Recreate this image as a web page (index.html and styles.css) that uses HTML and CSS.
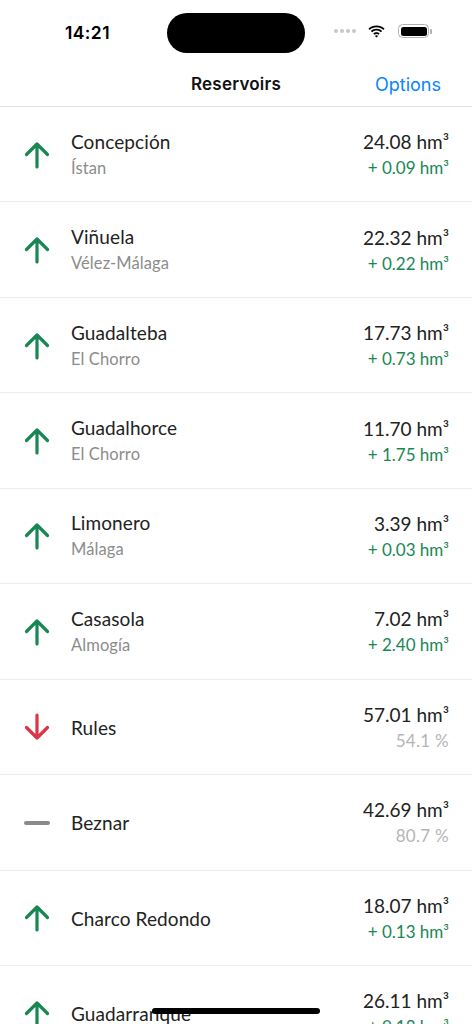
FILE: index.html
```html
<!DOCTYPE html>
<html lang="es">
<head>
<meta charset="utf-8">
<title>Reservoirs</title>
<link rel="stylesheet" href="styles.css">
</head>
<body>
<div class="screen">
  <div class="statusbar">
    <div class="time">14:21</div>
    <div class="island"></div>
    <div class="status-icons">
      <div class="dots"><span></span><span></span><span></span><span></span></div>
      <svg class="wifi" width="17" height="13" viewBox="0 0 17 13">
        <path d="M8.5 2.2c2.6 0 5 1 6.8 2.7l1.2-1.3C14.4 1.6 11.6 0.4 8.5 0.4S2.6 1.6 0.5 3.6l1.2 1.3C3.5 3.2 5.9 2.2 8.5 2.2z" fill="#000"/>
        <path d="M8.5 5.6c1.7 0 3.2 0.6 4.4 1.7l1.2-1.3C12.6 4.6 10.6 3.8 8.5 3.8S4.4 4.6 2.9 6l1.2 1.3C5.3 6.2 6.8 5.6 8.5 5.6z" fill="#000"/>
        <path d="M8.5 9c0.8 0 1.5 0.3 2 0.8l1.2-1.3c-0.8-0.8-2-1.3-3.2-1.3s-2.4 0.5-3.2 1.3l1.2 1.3C7 9.3 7.7 9 8.5 9z M8.5 12.6l1.6-1.7c-0.4-0.4-1-0.6-1.6-0.6s-1.2 0.2-1.6 0.6z" fill="#000"/>
      </svg>
      <div class="battery"><div class="battery-fill"></div></div>
      <div class="battery-nub"></div>
    </div>
  </div>
  <div class="navbar">
    <div class="nav-title">Reservoirs</div>
    <div class="nav-action">Options</div>
  </div>
  <ul class="list">
    <li class="row">
      <svg class="trend up" viewBox="0 0 26 28"><path d="M13 26V3M2.5 13.5L13 3l10.5 10.5"/></svg>
      <div class="names"><div class="name">Concepción</div><div class="place">Ístan</div></div>
      <div class="values"><div class="volume">24.08 hm³</div><div class="delta">+ 0.09 hm³</div></div>
    </li>
    <li class="row">
      <svg class="trend up" viewBox="0 0 26 28"><path d="M13 26V3M2.5 13.5L13 3l10.5 10.5"/></svg>
      <div class="names"><div class="name">Viñuela</div><div class="place">Vélez-Málaga</div></div>
      <div class="values"><div class="volume">22.32 hm³</div><div class="delta">+ 0.22 hm³</div></div>
    </li>
    <li class="row">
      <svg class="trend up" viewBox="0 0 26 28"><path d="M13 26V3M2.5 13.5L13 3l10.5 10.5"/></svg>
      <div class="names"><div class="name">Guadalteba</div><div class="place">El Chorro</div></div>
      <div class="values"><div class="volume">17.73 hm³</div><div class="delta">+ 0.73 hm³</div></div>
    </li>
    <li class="row">
      <svg class="trend up" viewBox="0 0 26 28"><path d="M13 26V3M2.5 13.5L13 3l10.5 10.5"/></svg>
      <div class="names"><div class="name">Guadalhorce</div><div class="place">El Chorro</div></div>
      <div class="values"><div class="volume">11.70 hm³</div><div class="delta">+ 1.75 hm³</div></div>
    </li>
    <li class="row">
      <svg class="trend up" viewBox="0 0 26 28"><path d="M13 26V3M2.5 13.5L13 3l10.5 10.5"/></svg>
      <div class="names"><div class="name">Limonero</div><div class="place">Málaga</div></div>
      <div class="values"><div class="volume">3.39 hm³</div><div class="delta">+ 0.03 hm³</div></div>
    </li>
    <li class="row">
      <svg class="trend up" viewBox="0 0 26 28"><path d="M13 26V3M2.5 13.5L13 3l10.5 10.5"/></svg>
      <div class="names"><div class="name">Casasola</div><div class="place">Almogía</div></div>
      <div class="values"><div class="volume">7.02 hm³</div><div class="delta">+ 2.40 hm³</div></div>
    </li>
    <li class="row">
      <svg class="trend down" viewBox="0 0 26 28"><path d="M13 2v23M2.5 14.5L13 25l10.5-10.5"/></svg>
      <div class="names"><div class="name">Rules</div></div>
      <div class="values"><div class="volume">57.01 hm³</div><div class="percent">54.1 %</div></div>
    </li>
    <li class="row">
      <svg class="trend flat" viewBox="0 0 26 28"><path d="M2 14h22"/></svg>
      <div class="names"><div class="name">Beznar</div></div>
      <div class="values"><div class="volume">42.69 hm³</div><div class="percent">80.7 %</div></div>
    </li>
    <li class="row">
      <svg class="trend up" viewBox="0 0 26 28"><path d="M13 26V3M2.5 13.5L13 3l10.5 10.5"/></svg>
      <div class="names"><div class="name">Charco Redondo</div></div>
      <div class="values"><div class="volume">18.07 hm³</div><div class="delta">+ 0.13 hm³</div></div>
    </li>
    <li class="row">
      <svg class="trend up" viewBox="0 0 26 28"><path d="M13 26V3M2.5 13.5L13 3l10.5 10.5"/></svg>
      <div class="names"><div class="name">Guadarranque</div></div>
      <div class="values"><div class="volume">26.11 hm³</div><div class="delta">+ 0.18 hm³</div></div>
    </li>
  </ul>
  <div class="home-indicator"></div>
</div>
</body>
</html>
```

FILE: styles.css
```css
* { box-sizing: border-box; }
html, body { margin: 0; padding: 0; background: #fff; }
body { font-family: Lato, "Open Sans", sans-serif; color: #222; }
.screen { position: relative; width: 472px; height: 1024px; overflow: hidden; background: #fff; }

.statusbar { height: 62px; display: flex; align-items: flex-start; position: relative; }
.time { font-family: Inter, "Liberation Sans", sans-serif; font-weight: 600; font-size: 17.5px; color: #000; margin: 22px 0 0 65px; width: 60px; letter-spacing: 0.4px; }
.island { width: 138px; height: 40px; border-radius: 20px; background: #000; margin: 13px 0 0 42px; }
.status-icons { display: flex; align-items: center; margin: 24px 0 0 29px; }
.dots { display: flex; gap: 2px; margin-right: 12px; }
.dots span { width: 4px; height: 4px; border-radius: 2px; background: #c8c8c8; }
.wifi { display: block; margin-right: 13px; }
.battery { width: 31px; height: 14px; border: 1.2px solid #b0b0b0; border-radius: 4.5px; padding: 1.5px; }
.battery-fill { width: 100%; height: 100%; background: #000; border-radius: 2.5px; }
.battery-nub { width: 2px; height: 5px; background: #b0b0b0; border-radius: 0 1px 1px 0; margin-left: 1px; }

.navbar { height: 45px; display: flex; align-items: center; justify-content: center; position: relative; border-bottom: 1px solid #e2e2e2; }
.nav-title { font-family: Inter, "Liberation Sans", sans-serif; font-weight: 600; font-size: 17px; color: #111; letter-spacing: 0.2px; }
.nav-action { position: absolute; right: 31px; top: 0; bottom: 0; display: flex; align-items: center; font-family: Inter, "Liberation Sans", sans-serif; font-size: 18px; color: #0a84ff; }

.list { list-style: none; margin: 0; padding: 0; }
.row { height: 95.44px; display: flex; align-items: center; border-bottom: 1px solid #ececec; padding: 1px 23px 0 24px; }
.trend { width: 26px; height: 28px; flex: none; fill: none; stroke-width: 3.2; stroke-linecap: round; stroke-linejoin: round; margin-right: 21px; }
.trend.up { stroke: #198754; }
.trend.down { stroke: #dc3545; }
.trend.flat { stroke: #8a8a8a; stroke-width: 4; }
.names { flex: 1; display: flex; flex-direction: column; }
.name { font-size: 19px; line-height: 25px; color: #222; letter-spacing: 0.1px; }
.place { font-size: 16.5px; line-height: 25px; margin-top: 2px; color: #8c8c8c; letter-spacing: 0.1px; }
.values { display: flex; flex-direction: column; align-items: flex-end; }
.volume { font-size: 19px; line-height: 25px; color: #222; }
.delta { font-size: 17px; line-height: 24px; margin-top: 2px; color: #198754; }
.percent { font-size: 17px; line-height: 24px; margin-top: 2px; color: #b5b5b5; letter-spacing: 0.3px; }

.home-indicator { position: absolute; left: 152px; width: 168px; top: 1008px; height: 6px; border-radius: 3px; background: #000; }
```
